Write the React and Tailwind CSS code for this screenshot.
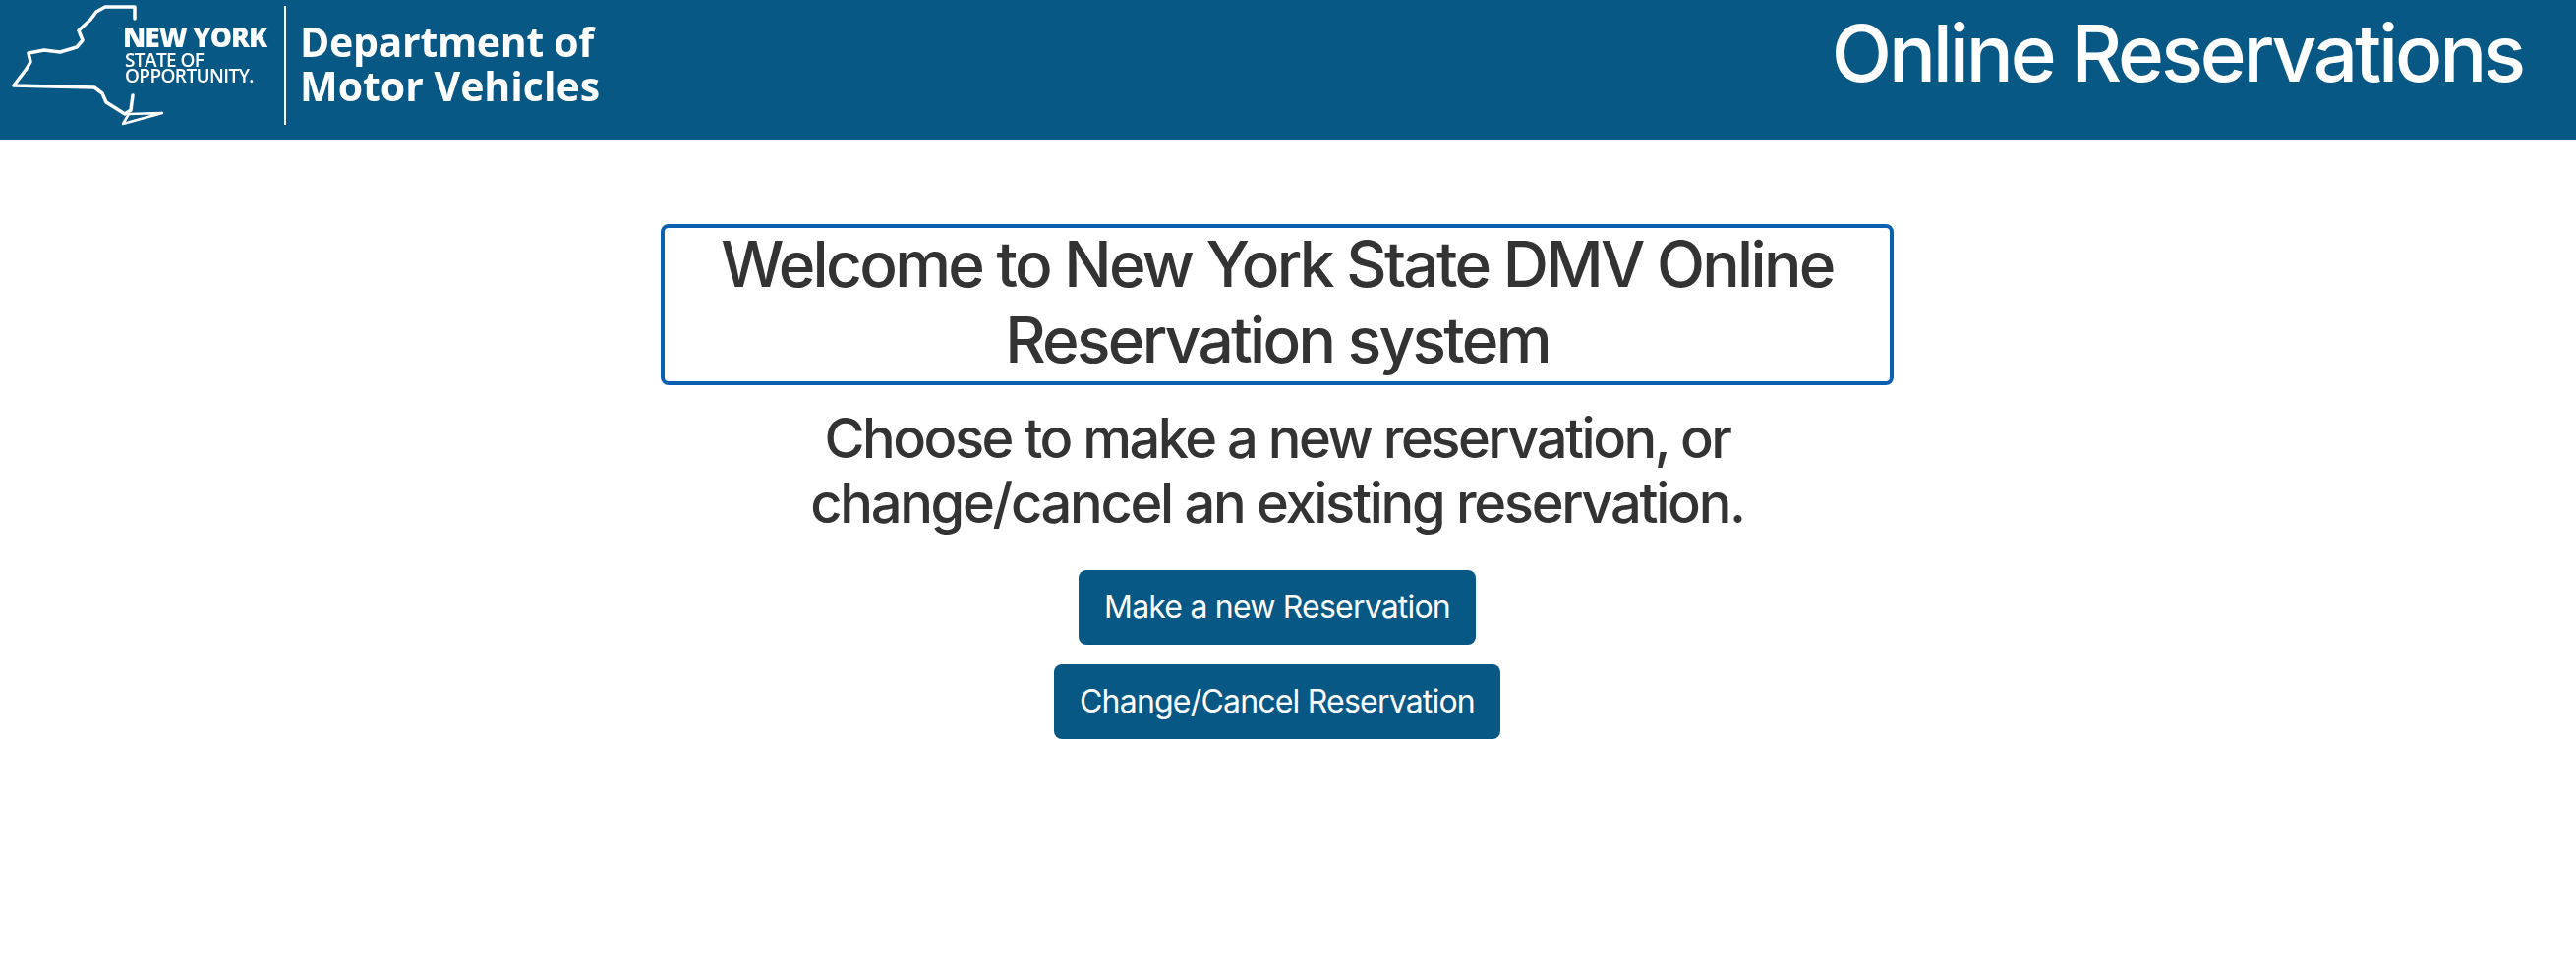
export default function App() {
  return (
    <div className="min-h-[986px] bg-white font-['Inter',sans-serif] text-[#333333]">
      <header className="flex h-[142px] items-start justify-between bg-[#085886] text-white">
        <div className="relative flex h-[142px] w-[640px] pl-[125px] font-['Open_Sans',sans-serif] blur-[0.6px]">
          <svg className="absolute left-0 top-0" width="170" height="142" viewBox="0 0 170 142" fill="none" stroke="white" strokeWidth="3.5" strokeLinejoin="round" strokeLinecap="round">
            <path d="M137 19 L137 7 L107 7 L98 12 L92 20 L80 31 L84 41 L78 48 L61 53 L45 51 L29 54 L31 63 L27 70 L14 87 L53 88 L96 89 L104 95 L108 104 L127 116 L133 112 L135 97" />
            <path d="M125 126 L165 115 L131 116 Z" strokeWidth="2.5" />
          </svg>
          <div className="flex w-[164px] flex-col pt-[21px]">
            <div className="text-[28px] leading-[32px] font-extrabold tracking-[-1px] whitespace-nowrap">NEW YORK</div>
            <div className="pl-[2px] text-[19px] leading-[16px] font-semibold tracking-[-0.6px] whitespace-nowrap">STATE OF</div>
            <div className="pl-[2px] text-[19px] leading-[16px] font-semibold tracking-[-0.6px] whitespace-nowrap">OPPORTUNITY.</div>
          </div>
          <div className="mt-[6px] h-[121px] w-[2px] bg-white" />
          <div className="flex flex-col pl-[14px] pt-[20px] text-[41px] leading-[45px] font-bold whitespace-nowrap">
            <div className="tracking-[-0.3px]">Department of</div>
            <div className="tracking-[0px]">Motor Vehicles</div>
          </div>
        </div>
        <h1 className="pr-[54px] pt-[6px] text-[80px] leading-[96px] font-medium tracking-[-3.2px] whitespace-nowrap">Online Reservations</h1>
      </header>
      <main className="flex w-[2598px] flex-col items-center pt-[86px]">
        <div className="w-[1254px] rounded-[8px] border-4 border-[#0b5fb1] pb-[4px] text-center text-[64px] leading-[77px] font-medium tracking-[-2.7px]">
          <div className="-mt-[2px]">Welcome to New York State DMV Online<br />Reservation system</div>
        </div>
        <h3 className="mt-[21px] text-center text-[56px] leading-[66px] font-medium">
          <span className="block tracking-[-2.5px]">Choose to make a new reservation, or</span>
          <span className="block tracking-[-2.3px]">change/cancel an existing reservation.</span>
        </h3>
        <button className="mt-[35px] rounded-[8px] bg-[#085886] px-[26px] py-[14px] text-[32px] leading-[48px] text-white tracking-[-0.8px]">Make a new Reservation</button>
        <button className="mt-[20px] rounded-[8px] bg-[#085886] px-[26px] py-[14px] text-[32px] leading-[48px] text-white tracking-[-0.8px]">Change/Cancel Reservation</button>
      </main>
    </div>
  );
}
